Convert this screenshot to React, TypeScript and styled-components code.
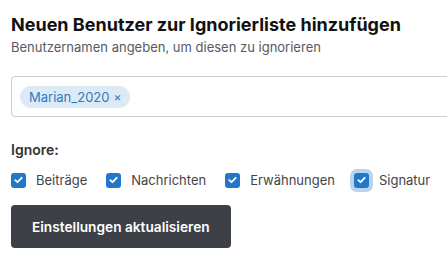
import React from "react";
import styled, { createGlobalStyle } from "styled-components";

const Global = createGlobalStyle`
  html, body { margin: 0; padding: 0; background: #fff; overflow: hidden; }
  body { font-family: Inter, "Noto Sans", sans-serif; }
`;

const Page = styled.div`
  width: 470px;
  padding: 14px 0 0 11px;
  box-sizing: border-box;
`;

const Title = styled.h2`
  margin: 0;
  font-size: 18px;
  line-height: 22px;
  font-weight: 700;
  color: #111;
`;

const Subtitle = styled.p`
  margin: 2px 0 0;
  font-size: 13px;
  line-height: 18px;
  color: #555a62;
`;

const TagInput = styled.div`
  margin-top: 20px;
  height: 41px;
  box-sizing: border-box;
  border: 1px solid #c9cdd4;
  border-radius: 4px;
  display: flex;
  align-items: center;
  padding: 0 8px;
`;

const Chip = styled.span`
  display: inline-flex;
  align-items: center;
  height: 22px;
  padding: 0 9px;
  border-radius: 11px;
  background: #dceaf6;
  color: #2f7bbf;
  font-size: 13px;
  gap: 4px;
`;

const Remove = styled.span`
  font-size: 12px;
`;

const Label = styled.div`
  margin-top: 23px;
  font-size: 14px;
  font-weight: 600;
  color: #333;
  line-height: 20px;
`;

const Options = styled.div`
  display: flex;
  align-items: center;
  margin-top: 12px;
  gap: 19px;
`;

const Option = styled.label`
  display: flex;
  align-items: center;
  gap: 10px;
  font-size: 13px;
  color: #444;
`;

const Box = styled.span<{ $focus?: boolean }>`
  width: 15px;
  height: 15px;
  border-radius: 3px;
  background: #2277c9;
  display: inline-flex;
  align-items: center;
  justify-content: center;
  box-shadow: ${(p) => (p.$focus ? "0 0 0 4px #b9d3ee" : "none")};
`;

const Button = styled.button`
  margin-top: 17px;
  height: 43px;
  padding: 0 21px;
  border: none;
  border-radius: 4px;
  background: #3d4047;
  color: #fff;
  font-family: Inter, sans-serif;
  font-size: 13.7px;
  font-weight: 600;
`;

const Check = () => (
  <svg width="9" height="8" viewBox="0 0 9 8">
    <path d="M1.3 4.2 L3.5 6.2 L7.7 1.8" fill="none" stroke="#fff" strokeWidth="1.8" strokeLinecap="round" strokeLinejoin="round" />
  </svg>
);

const items = ["Beiträge", "Nachrichten", "Erwähnungen", "Signatur"];

export default function App() {
  return (
    <>
      <Global />
      <Page>
        <Title>Neuen Benutzer zur Ignorierliste hinzufügen</Title>
        <Subtitle>Benutzernamen angeben, um diesen zu ignorieren</Subtitle>
        <TagInput>
          <Chip>
            Marian_2020 <Remove>×</Remove>
          </Chip>
        </TagInput>
        <Label>Ignore:</Label>
        <Options>
          {items.map((t, i) => (
            <Option key={t}>
              <Box $focus={i === 3}>
                <Check />
              </Box>
              {t}
            </Option>
          ))}
        </Options>
        <Button>Einstellungen aktualisieren</Button>
      </Page>
    </>
  );
}
